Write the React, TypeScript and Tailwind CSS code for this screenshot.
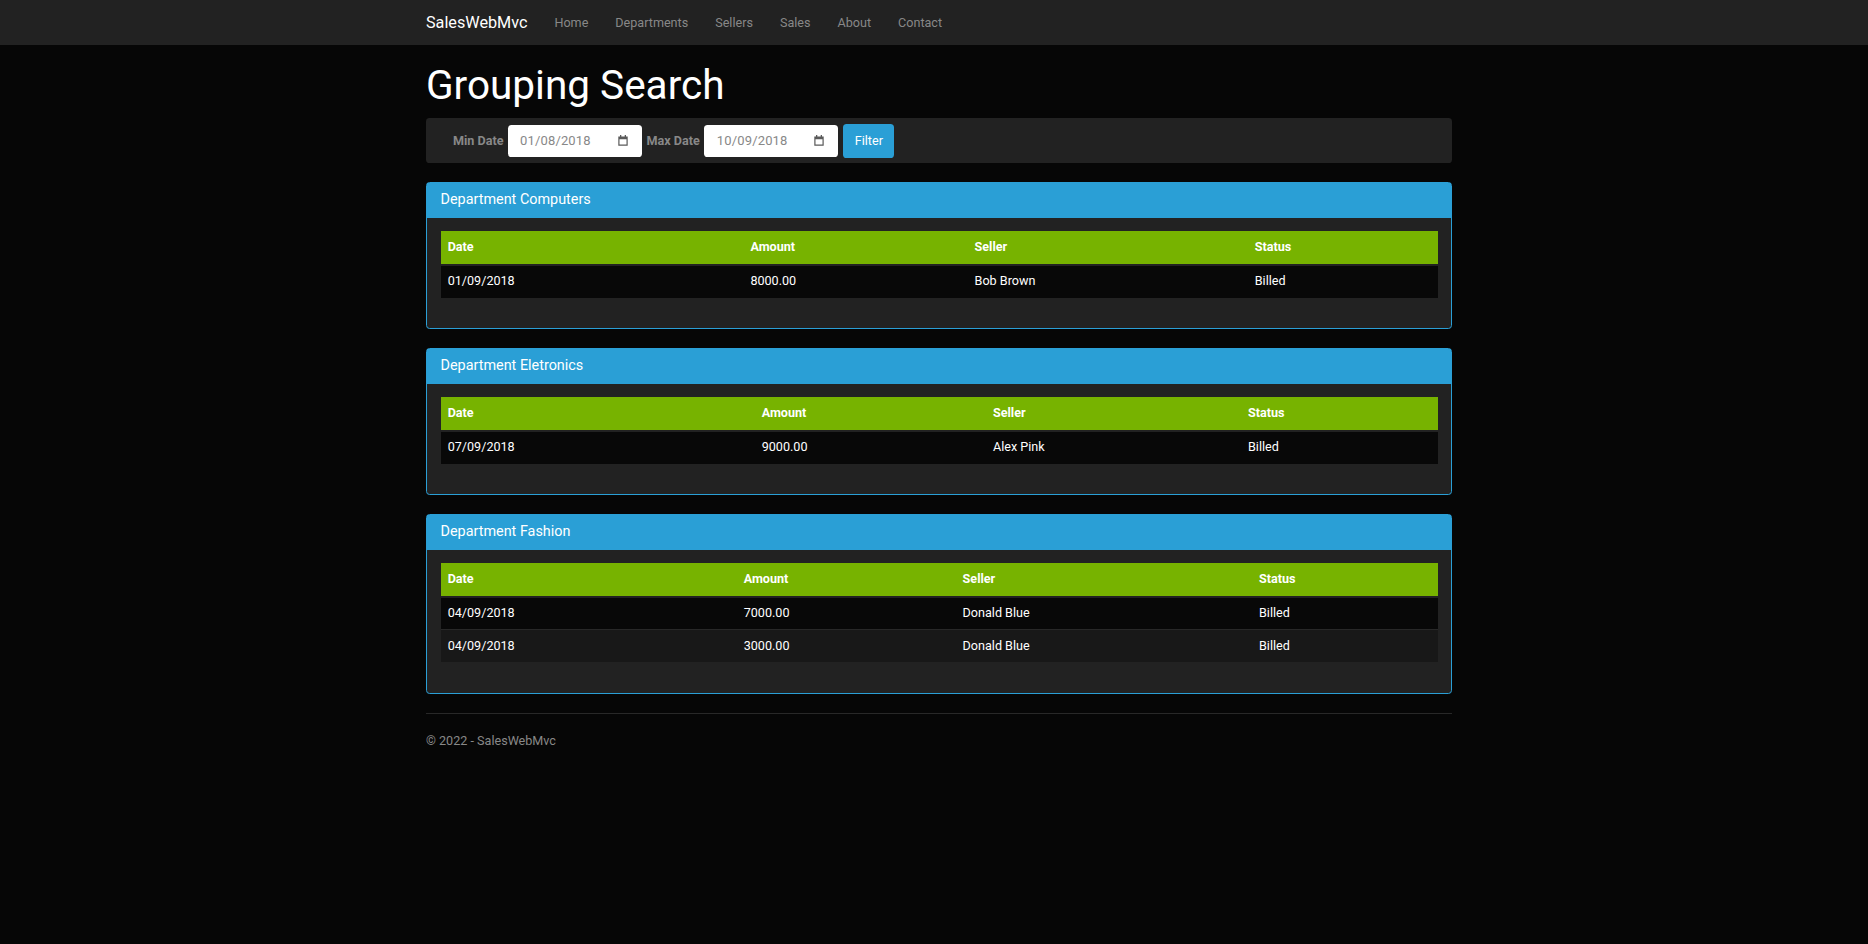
import React from "react";

type Row = { date: string; amount: string; seller: string; status: string };
type Dept = { name: string; cols: [string, string, string, string]; rows: Row[] };

const depts: Dept[] = [
  {
    name: "Department Computers",
    cols: ["w-[302.7px]", "w-[224.2px]", "w-[280.2px]", "w-[190px]"],
    rows: [{ date: "01/09/2018", amount: "8000.00", seller: "Bob Brown", status: "Billed" }],
  },
  {
    name: "Department Eletronics",
    cols: ["w-[314px]", "w-[231.3px]", "w-[255px]", "w-[196.7px]"],
    rows: [{ date: "07/09/2018", amount: "9000.00", seller: "Alex Pink", status: "Billed" }],
  },
  {
    name: "Department Fashion",
    cols: ["w-[296px]", "w-[218.9px]", "w-[296.4px]", "w-[185.7px]"],
    rows: [
      { date: "04/09/2018", amount: "7000.00", seller: "Donald Blue", status: "Billed" },
      { date: "04/09/2018", amount: "3000.00", seller: "Donald Blue", status: "Billed" },
    ],
  },
];

function CalendarIcon() {
  return (
    <svg width="10" height="11" viewBox="0 0 10 11" fill="#5a5a5a">
      <rect x="2" y="0" width="1.3" height="2" />
      <rect x="6.7" y="0" width="1.3" height="2" />
      <path fillRule="evenodd" d="M0.3 1.5h9.4v9.3H0.3z M1.5 4.2h7v5.4h-7z" />
    </svg>
  );
}

function DateBox({ value }: { value: string }) {
  return (
    <div className="flex h-[32px] w-[134px] items-center justify-between rounded-[3.6px] bg-white pl-[12.5px] pr-[14px] text-[13px] text-[#888]">
      <span className="tracking-[0.15px]">{value}</span>
      <CalendarIcon />
    </div>
  );
}

function Panel({ dept }: { dept: Dept }) {
  return (
    <div className="mb-[19px] rounded-[3.6px] border border-[#2a9fd6] bg-[#222]">
      <div className="h-[35px] bg-[#2a9fd6] px-[13.5px] pt-[9px] text-[14.4px] leading-[15.84px] text-white">
        {dept.name}
      </div>
      <div className="px-[13.5px] pt-[13px] pb-[13px]">
        <table className="mb-[17.5px] w-full table-fixed border-collapse text-[12.6px] leading-[18px] text-white">
          <colgroup>
            {dept.cols.map((c, i) => (
              <col key={i} className={c} />
            ))}
          </colgroup>
          <thead>
            <tr className="bg-[#77b300]">
              {["Date", "Amount", "Seller", "Status"].map((h) => (
                <th
                  key={h}
                  className="h-[34px] border-b-2 border-[#222] px-[7.2px] pb-[2px] text-left align-middle font-bold"
                >
                  {h}
                </th>
              ))}
            </tr>
          </thead>
          <tbody>
            {dept.rows.map((r, i) => (
              <tr
                key={i}
                className={
                  i % 2 === 0
                    ? "bg-[#080808]"
                    : "border-t border-[#282828] bg-[#181818]"
                }
              >
                {[r.date, r.amount, r.seller, r.status].map((v, j) => (
                  <td key={j} className="h-[32.5px] px-[7.2px] pb-[1px] align-middle">
                    {v}
                  </td>
                ))}
              </tr>
            ))}
          </tbody>
        </table>
      </div>
    </div>
  );
}

export default function App() {
  return (
    <div className="min-h-[944px] bg-[#060606] font-[Roboto,sans-serif] text-[12.6px] leading-[18px] text-[#888]">
      <nav className="h-[45px] bg-[#222] pl-[10px]">
        <div className="mx-auto flex h-full w-[1026px] items-center">
          <span className="pr-[13.5px] text-[16.2px] leading-[18px] text-white">SalesWebMvc</span>
          {["Home", "Departments", "Sellers", "Sales", "About", "Contact"].map((l) => (
            <span key={l} className="px-[13.5px] text-[12.6px] leading-[18px] text-[#888]">
              {l}
            </span>
          ))}
        </div>
      </nav>
      <main className="pl-[10px]">
        <div className="mx-auto w-[1026px]">
          <h2 className="mt-[18px] text-[40.5px] font-normal leading-[44.55px] text-white">
            Grouping Search
          </h2>
          <div className="mt-[10.5px] flex h-[45px] items-center rounded-[3.6px] bg-[#222] pl-[27px]">
            <span className="font-bold text-[#888]">Min Date</span>
            <div className="ml-[4px]">
              <DateBox value="01/08/2018" />
            </div>
            <span className="ml-[5px] font-bold text-[#888]">Max Date</span>
            <div className="ml-[4.5px]">
              <DateBox value="10/09/2018" />
            </div>
            <button className="ml-[5px] h-[34px] w-[51px] rounded-[3.6px] bg-[#2a9fd6] text-[12.6px] text-white">
              Filter
            </button>
          </div>
          <div className="mt-[19px]">
            {depts.map((d) => (
              <Panel key={d.name} dept={d} />
            ))}
          </div>
          <hr className="border-t border-[#282828]" />
          <footer className="mt-[18px] text-[#888]">© 2022 - SalesWebMvc</footer>
        </div>
      </main>
    </div>
  );
}
